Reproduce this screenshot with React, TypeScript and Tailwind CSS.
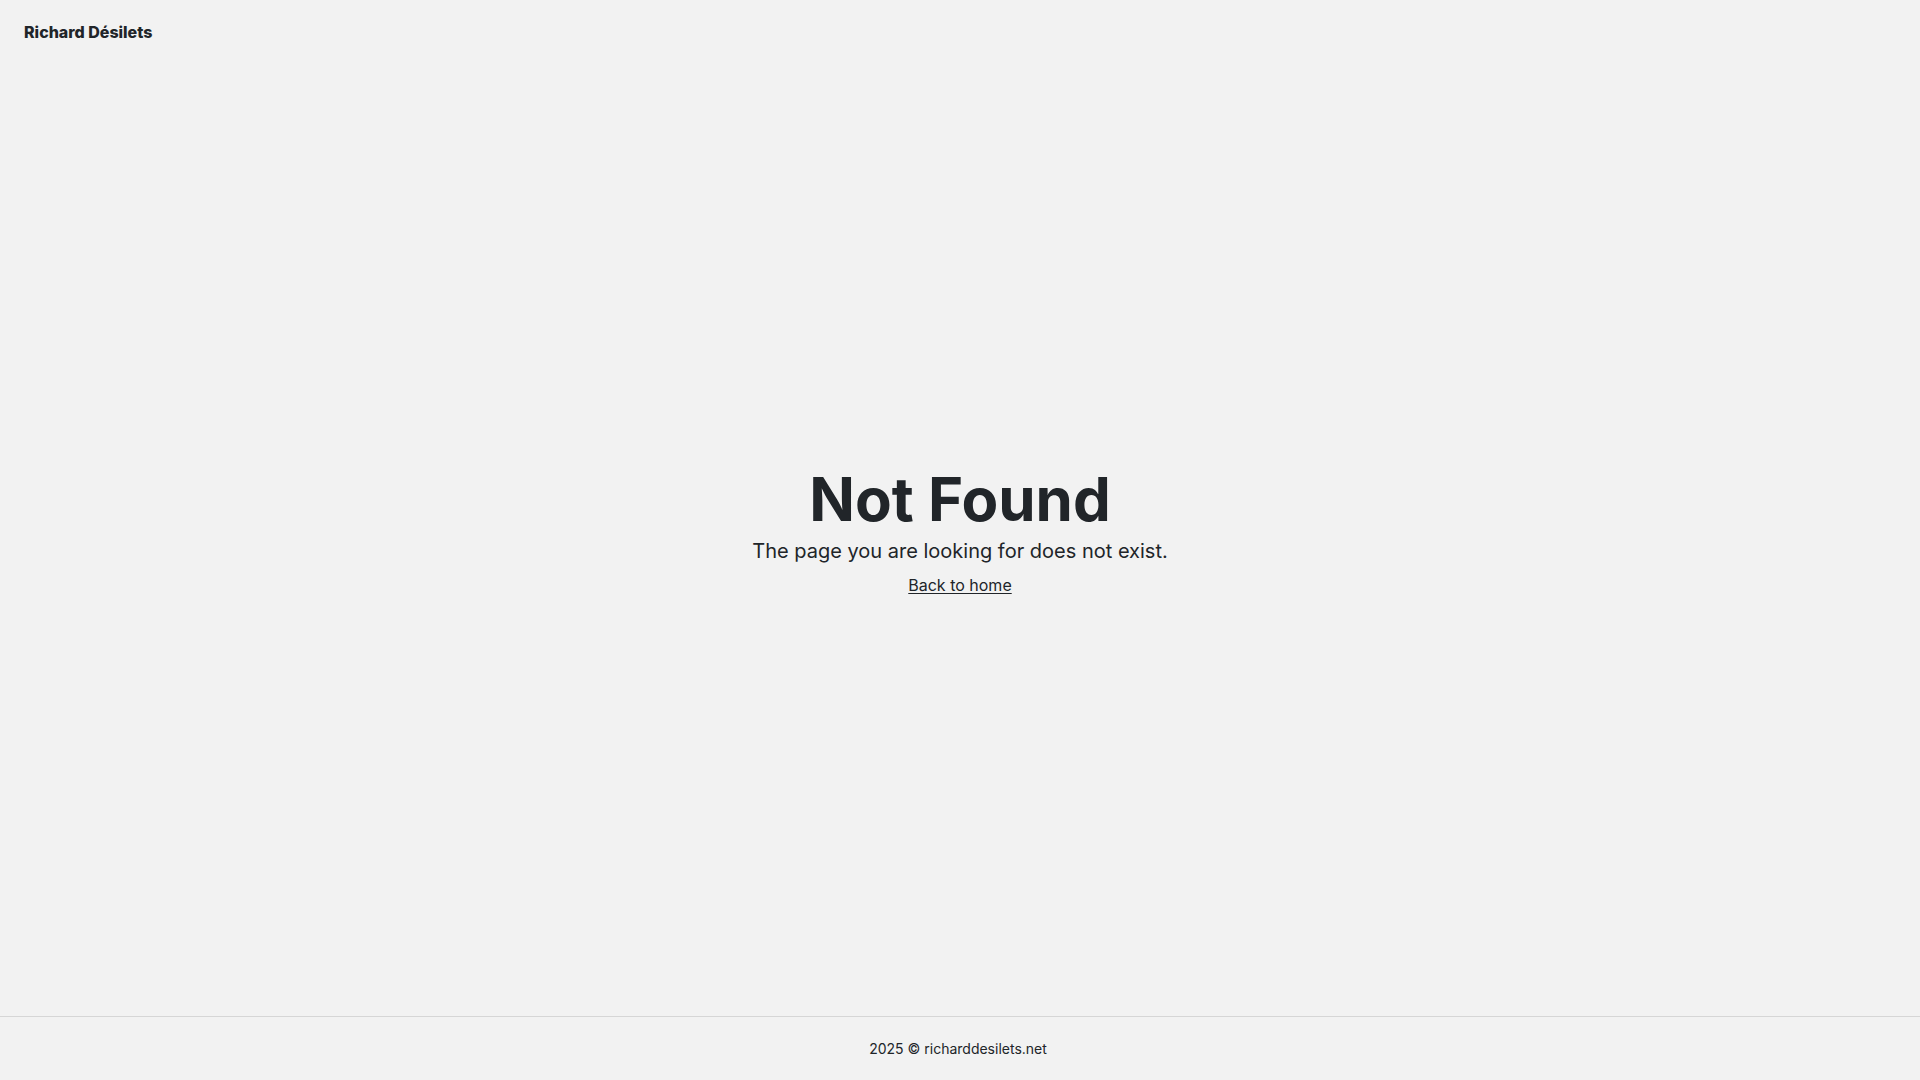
export default function App() {
  return (
    <div
      className="flex min-h-screen flex-col bg-[#f2f2f2] text-[#212529]"
      style={{ fontFamily: "Inter, 'Noto Sans', sans-serif" }}
    >
      <header className="flex h-16 items-center px-6">
        <a href="#" className="text-base font-extrabold">
          Richard Désilets
        </a>
      </header>

      <main className="flex flex-1 flex-col items-center justify-center pb-[14px] text-center">
        <h1 className="text-6xl leading-none font-bold">Not Found</h1>
        <p className="mt-2 text-xl">The page you are looking for does not exist.</p>
        <a href="#" className="mt-2 text-base underline underline-offset-2">
          Back to home
        </a>
      </main>

      <footer className="flex h-16 items-center justify-center border-t border-[#d6d6d6] pr-1 text-sm">
        2025 © richarddesilets.net
      </footer>
    </div>
  );
}
